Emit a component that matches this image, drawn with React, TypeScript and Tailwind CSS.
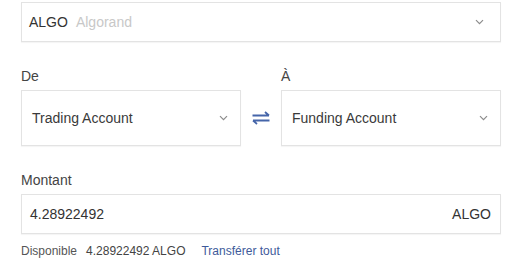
import { useState } from "react";

const Chevron = () => (
  <svg width="9" height="6" viewBox="0 0 9 6" fill="none" className="shrink-0">
    <path d="M1 1.2l3.5 3.5 3.5-3.5" stroke="#8c8c8c" strokeWidth="1.2" />
  </svg>
);

const SwapIcon = () => (
  <svg width="18" height="14" viewBox="0 0 18 14" fill="none">
    <path d="M0.5 4.5h16.5M17 4.5l-4-3.5" stroke="#4565a9" strokeWidth="1.8" />
    <path d="M17.5 9.5H1M1 9.5l4 3.5" stroke="#4565a9" strokeWidth="1.8" />
  </svg>
);

const AccountSelect = ({ label, value }: { label: string; value: string }) => (
  <div className="flex flex-col w-[220px]">
    <span className="text-sm leading-5 text-[#444] mb-1">{label}</span>
    <button
      type="button"
      className="h-[56px] flex items-center justify-between pl-[10px] pr-[12px] border border-[#e3e3e3] bg-white shadow-[0_1px_1px_rgba(0,0,0,0.04)] text-sm text-[#3a3a3a]"
    >
      <span>{value}</span>
      <Chevron />
    </button>
  </div>
);

const App = () => {
  const [amount] = useState("4.28922492");

  return (
    <div className="bg-white w-[513px] h-[260px] pl-[21px] pt-[2px] font-['Liberation_Sans',Arial,sans-serif]">
      <div className="w-[480px]">
        {/* Coin select */}
        <button
          type="button"
          className="w-full h-[40px] flex items-center justify-between pl-[7px] pr-[16px] border border-[#e3e3e3] bg-white shadow-[0_1px_1px_rgba(0,0,0,0.04)] text-sm"
        >
          <span>
            <span className="text-[#333]">ALGO</span>
            <span className="ml-[8px] text-[#c8c8c8]">Algorand</span>
          </span>
          <Chevron />
        </button>

        {/* From / To */}
        <div className="flex items-end justify-between mt-[24px]">
          <AccountSelect label="De" value="Trading Account" />
          <div className="h-[56px] flex-1 flex items-center justify-center">
            <SwapIcon />
          </div>
          <AccountSelect label="À" value="Funding Account" />
        </div>

        {/* Amount */}
        <div className="mt-[24px]">
          <span className="block text-sm leading-5 text-[#444] mb-1">Montant</span>
          <div className="h-[40px] flex items-center justify-between pl-[8px] pr-[9px] border border-[#e3e3e3] bg-white shadow-[0_1px_1px_rgba(0,0,0,0.04)] text-sm text-[#333]">
            <span>{amount}</span>
            <span>ALGO</span>
          </div>
        </div>

        <div className="mt-[9px] flex items-center text-xs leading-4">
          <span className="text-[#555]">Disponible</span>
          <span className="ml-[9px] text-[#444]">4.28922492 ALGO</span>
          <a className="ml-[16px] text-[#3e5a9a]">Transférer tout</a>
        </div>
      </div>
    </div>
  );
};

export default App;
